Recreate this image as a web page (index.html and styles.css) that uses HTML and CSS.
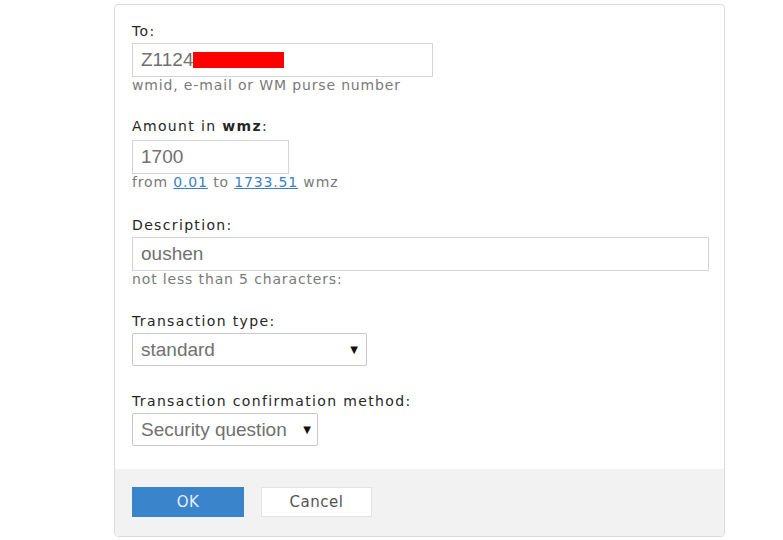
FILE: index.html
```html
<!DOCTYPE html>
<html>
<head>
<meta charset="utf-8">
<link rel="stylesheet" href="styles.css">
</head>
<body>
<div class="page">
  <div class="card">
    <div class="body">
      <div class="group g1">
        <div class="label">To:</div>
        <div class="input w1"><span>Z1124</span><span class="redact"></span></div>
        <div class="hint">wmid, e-mail or WM purse number</div>
      </div>
      <div class="group g2">
        <div class="label">Amount in <b>wmz</b>:</div>
        <div class="input w2"><span>1700</span></div>
        <div class="hint">from <a href="#">0.01</a> to <a href="#">1733.51</a> wmz</div>
      </div>
      <div class="group g3">
        <div class="label">Description:</div>
        <div class="input w3"><span>oushen</span></div>
        <div class="hint">not less than 5 characters:</div>
      </div>
      <div class="group g4">
        <div class="label">Transaction type:</div>
        <div class="select s1"><span>standard</span><span class="arrow">&#9660;</span></div>
      </div>
      <div class="group last">
        <div class="label">Transaction confirmation method:</div>
        <div class="select s2"><span>Security question</span><span class="arrow">&#9660;</span></div>
      </div>
    </div>
    <div class="footer">
      <div class="btn ok">OK</div>
      <div class="btn cancel">Cancel</div>
    </div>
  </div>
</div>
</body>
</html>
```
FILE: styles.css
```css
html, body {
  margin: 0;
  padding: 0;
  background: #fff;
}
.page {
  padding: 4px 0 0 114px;
}
.card {
  width: 609px;
  border: 1px solid #dcdcdc;
  border-radius: 4px;
  overflow: hidden;
  background: #fff;
}
.body {
  padding: 17px 17px 23px 17px;
}
.group {
  margin-bottom: 24px;
}
.g2 {
  margin-bottom: 26px;
}
.g2 .label {
  margin-bottom: 5px;
}
.g3 {
  margin-bottom: 25px;
}
.g4 {
  margin-bottom: 26px;
}
.group.last {
  margin-bottom: 0;
}
.label {
  font-family: "DejaVu Sans", Verdana, sans-serif;
  font-size: 14px;
  letter-spacing: 1.35px;
  line-height: 18px;
  color: #262626;
  margin-bottom: 3px;
}
.label b {
  font-weight: bold;
}
.input, .select {
  box-sizing: border-box;
  height: 34px;
  border: 1px solid #d4d4d4;
  display: flex;
  align-items: center;
  padding: 0 8px;
  font-family: "Liberation Sans", Arial, sans-serif;
  font-size: 19px;
  color: #707070;
  background: #fff;
}
.w1 { width: 301px; }
.w2 { width: 157px; }
.w3 { width: 577px; }
.redact {
  display: inline-block;
  width: 91px;
  height: 16px;
  background: #ff0000;
}
.hint {
  font-family: "DejaVu Sans", Verdana, sans-serif;
  font-size: 14px;
  letter-spacing: 0.85px;
  line-height: 16px;
  color: #7a7a7a;
}
.hint a {
  color: #3a7fc4;
  text-decoration: underline;
}
.select {
  height: 33px;
  justify-content: space-between;
  border-color: #c8c8c8;
  border-radius: 2px;
}
.s1 { width: 235px; }
.s2 { width: 186px; padding-right: 6px; }
.arrow {
  font-size: 10px;
  color: #111;
  font-family: "DejaVu Sans", sans-serif;
}
.footer {
  background: #f2f2f2;
  padding: 18px 17px 19px 17px;
  display: flex;
  gap: 17px;
}
.btn {
  box-sizing: border-box;
  height: 30px;
  display: flex;
  align-items: center;
  justify-content: center;
  font-family: "DejaVu Sans", Verdana, sans-serif;
  font-size: 15px;
  letter-spacing: 0.5px;
}
.ok {
  width: 112px;
  background: #3a84cc;
  color: #e3eef9;
}
.cancel {
  width: 111px;
  background: #fff;
  border: 1px solid #e2e2e2;
  color: #555;
}
```
